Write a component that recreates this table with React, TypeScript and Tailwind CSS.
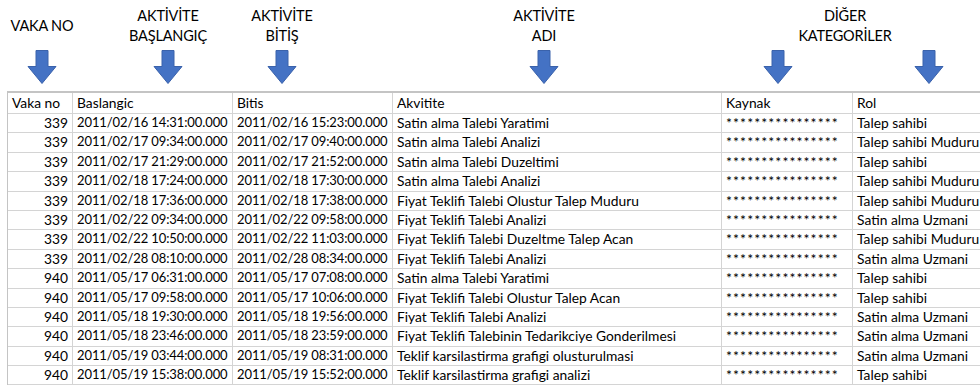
const rows = [
  ['339', '2011/02/16 14:31:00.000', '2011/02/16 15:23:00.000', 'Satin alma Talebi Yaratimi', 'Talep sahibi'],
  ['339', '2011/02/17 09:34:00.000', '2011/02/17 09:40:00.000', 'Satin alma Talebi Analizi', 'Talep sahibi Muduru'],
  ['339', '2011/02/17 21:29:00.000', '2011/02/17 21:52:00.000', 'Satin alma Talebi Duzeltimi', 'Talep sahibi'],
  ['339', '2011/02/18 17:24:00.000', '2011/02/18 17:30:00.000', 'Satin alma Talebi Analizi', 'Talep sahibi Muduru'],
  ['339', '2011/02/18 17:36:00.000', '2011/02/18 17:38:00.000', 'Fiyat Teklifi Talebi Olustur Talep Muduru', 'Talep sahibi Muduru'],
  ['339', '2011/02/22 09:34:00.000', '2011/02/22 09:58:00.000', 'Fiyat Teklifi Talebi Analizi', 'Satin alma Uzmani'],
  ['339', '2011/02/22 10:50:00.000', '2011/02/22 11:03:00.000', 'Fiyat Teklifi Talebi Duzeltme Talep Acan', 'Talep sahibi Muduru'],
  ['339', '2011/02/28 08:10:00.000', '2011/02/28 08:34:00.000', 'Fiyat Teklifi Talebi Analizi', 'Satin alma Uzmani'],
  ['940', '2011/05/17 06:31:00.000', '2011/05/17 07:08:00.000', 'Satin alma Talebi Yaratimi', 'Talep sahibi'],
  ['940', '2011/05/17 09:58:00.000', '2011/05/17 10:06:00.000', 'Fiyat Teklifi Talebi Olustur Talep Acan', 'Talep sahibi'],
  ['940', '2011/05/18 19:30:00.000', '2011/05/18 19:56:00.000', 'Fiyat Teklifi Talebi Analizi', 'Satin alma Uzmani'],
  ['940', '2011/05/18 23:46:00.000', '2011/05/18 23:59:00.000', 'Fiyat Teklifi Talebinin Tedarikciye Gonderilmesi', 'Satin alma Uzmani'],
  ['940', '2011/05/19 03:44:00.000', '2011/05/19 08:31:00.000', 'Teklif karsilastirma grafigi olusturulmasi', 'Satin alma Uzmani'],
  ['940', '2011/05/19 15:38:00.000', '2011/05/19 15:52:00.000', 'Teklif karsilastirma grafigi analizi', 'Talep sahibi'],
];

const Arrow = () => (
  <svg width="30" height="34" viewBox="0 0 30 34" className="block">
    <polygon
      points="9,0.5 21,0.5 21,16.5 29,16.5 15,33.5 1,16.5 9,16.5"
      fill="#4472c4"
      stroke="#3a62ab"
      strokeWidth="1"
    />
  </svg>
);

const Label = ({ lines }: { lines: string[] }) => (
  <div className="mt-[6px] h-[40px] flex flex-col items-center justify-center whitespace-nowrap text-[14.5px] leading-[20px] tracking-[-0.2px] text-black">
    {lines.map((l) => (
      <div key={l}>{l}</div>
    ))}
  </div>
);

const cell = 'h-[19.4px] border-r border-b border-[#d4d4d4] px-[4px] leading-[17.5px] whitespace-nowrap overflow-hidden';
const head = 'h-[21px] border-r border-b border-[#d4d4d4] px-[4px] leading-[19px] whitespace-nowrap';
const date = 'text-[13px] tracking-[-0.1px]';

const App = () => {
  return (
    <div
      className="w-[980px] h-[385px] overflow-hidden bg-white text-black"
      style={{ fontFamily: 'Lato, "Liberation Sans", sans-serif' }}
    >
      <div className="flex h-[91px]">
        <div className="w-[84px] flex flex-col items-center">
          <Label lines={['VAKA NO']} />
          <div className="mt-[4px]">
            <Arrow />
          </div>
        </div>
        <div className="ml-[34px] w-[100px] flex flex-col items-center">
          <Label lines={['AKTİVİTE', 'BAŞLANGIÇ']} />
          <div className="mt-[4px]">
            <Arrow />
          </div>
        </div>
        <div className="ml-[14px] w-[100px] flex flex-col items-center">
          <Label lines={['AKTİVİTE', 'BİTİŞ']} />
          <div className="mt-[4px]">
            <Arrow />
          </div>
        </div>
        <div className="ml-[162px] w-[100px] flex flex-col items-center">
          <Label lines={['AKTİVİTE', 'ADI']} />
          <div className="mt-[4px]">
            <Arrow />
          </div>
        </div>
        <div className="ml-[151px] w-[200px] flex flex-col">
          <Label lines={['DİĞER', 'KATEGORİLER']} />
          <div className="mt-[4px] flex pl-[18px] gap-[121px]">
            <Arrow />
            <Arrow />
          </div>
        </div>
      </div>

      <div className="ml-[7px] border-l border-t-2 border-[#c4c4c4] grid grid-cols-[65px_160px_160px_329px_131px_200px] text-[13.8px]">
        <div className={head}>Vaka no</div>
        <div className={head}>Baslangic</div>
        <div className={head}>Bitis</div>
        <div className={head}>Akvitite</div>
        <div className={head}>Kaynak</div>
        <div className={head}>Rol</div>
        {rows.map((r, i) => (
          <div key={i} className="contents">
            <div className={`${cell} text-right`}>{r[0]}</div>
            <div className={`${cell} ${date}`}>{r[1]}</div>
            <div className={`${cell} ${date}`}>{r[2]}</div>
            <div className={cell}>{r[3]}</div>
            <div className={`${cell} text-[14px] tracking-[1.1px]`}>****************</div>
            <div className={cell}>{r[4]}</div>
          </div>
        ))}
      </div>
    </div>
  );
};

export default App;
